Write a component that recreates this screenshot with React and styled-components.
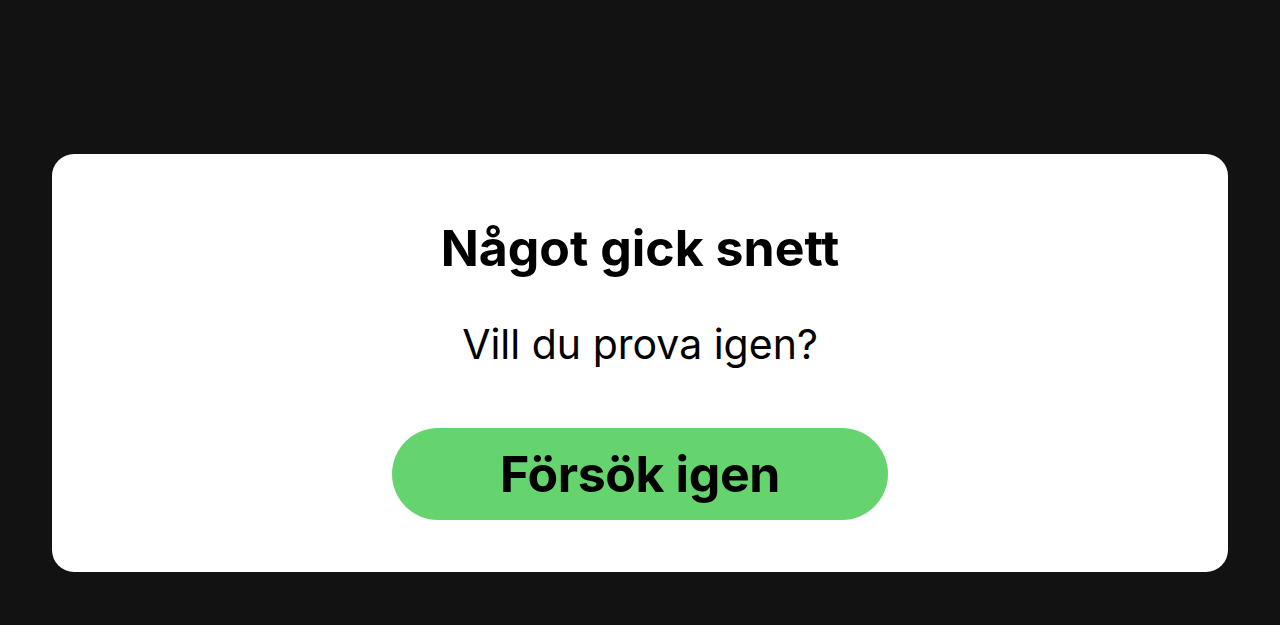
import React from "react";
import styled, { createGlobalStyle } from "styled-components";

const GlobalStyle = createGlobalStyle`
  html, body {
    margin: 0;
    padding: 0;
    background-color: #121212;
  }
  body {
    font-family: "Inter", "Noto Sans", sans-serif;
  }
`;

const Page = styled.div`
  min-height: 625px;
  display: flex;
  align-items: flex-start;
  padding: 154px 52px 0;
  box-sizing: border-box;
`;

const Card = styled.div`
  flex: 1;
  height: 418px;
  box-sizing: border-box;
  background-color: white;
  border-radius: 22px;
  display: flex;
  flex-direction: column;
  align-items: center;
  padding-top: 66px;
`;

const Title = styled.h1`
  margin: 0;
  font-size: 50px;
  font-weight: 700;
  line-height: 56px;
  color: #000;
`;

const Message = styled.p`
  margin: 45px 0 0;
  font-size: 41px;
  font-weight: 400;
  line-height: 46px;
  color: #000;
`;

const RetryBtn = styled.button`
  margin-top: 61px;
  width: 496px;
  height: 92px;
  border: none;
  border-radius: 46px;
  background-color: #65d46e;
  color: #000;
  font-family: "Inter", "Noto Sans", sans-serif;
  font-size: 50px;
  font-weight: 700;
  letter-spacing: -0.4px;
  cursor: pointer;
`;

const App = () => {
  return (
    <>
      <GlobalStyle />
      <Page>
        <Card>
          <Title>Något gick snett</Title>
          <Message>Vill du prova igen?</Message>
          <RetryBtn>Försök igen</RetryBtn>
        </Card>
      </Page>
    </>
  );
};

export default App;
